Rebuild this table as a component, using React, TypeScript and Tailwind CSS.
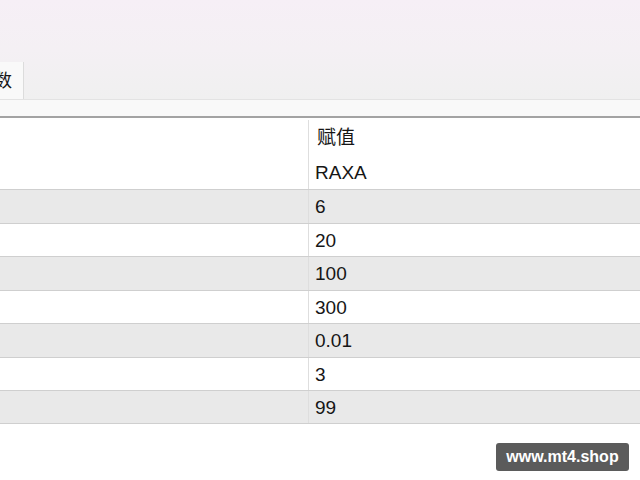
import React from "react";

const rows: { v: string; h: string; gray: boolean }[] = [
  { v: "6", h: "h-[34px]", gray: true },
  { v: "20", h: "h-[33px]", gray: false },
  { v: "100", h: "h-[34px]", gray: true },
  { v: "300", h: "h-[33px]", gray: false },
  { v: "0.01", h: "h-[34px]", gray: true },
  { v: "3", h: "h-[33px]", gray: false },
  { v: "99", h: "h-[33px]", gray: true },
];

const font = { fontFamily: '"Liberation Sans", "Noto Sans CJK SC", sans-serif' };

export default function App() {
  return (
    <div className="relative w-[640px] h-[480px] overflow-hidden bg-white text-[#161616]" style={font}>
      {/* window top + tab strip */}
      <div className="h-[100px] bg-gradient-to-b from-[#f6eff6] via-[#f4f0f4] to-[#f0f0f0] flex items-end border-b border-[#e3e3e3]">
        <div className="w-[24px] h-[37px] bg-[#f9f9f9] border-r border-[#dcdcdc] overflow-hidden flex items-center">
          <span className="text-[18px] -ml-[24px] leading-none whitespace-nowrap">参数</span>
        </div>
      </div>
      <div className="h-[18px] bg-[#f9f9f9] border-b-2 border-[#a3a3a3]" />

      {/* table */}
      <div className="flex flex-col">
        <div className="flex h-[38px]">
          <div className="w-[309px] border-r border-[#dedede] mt-[2px]" />
          <div className="flex-1 pl-[8px] flex items-center text-[19px] pt-[2px]">赋值</div>
        </div>
        <div className="flex h-[34px] border-b border-[#cfcfcf]">
          <div className="w-[309px] border-r border-[#dedede]" />
          <div className="flex-1 pl-[6px] flex items-center text-[19px] pt-[2px]">RAXA</div>
        </div>
        {rows.map((r, i) => (
          <div
            key={i}
            className={`flex ${r.h} border-b border-[#cfcfcf] ${r.gray ? "bg-[#e9e9e9]" : "bg-white"}`}
          >
            <div className="w-[309px] border-r border-[#dedede]" />
            <div className="flex-1 pl-[6px] flex items-center text-[19px] pt-[2px]">{r.v}</div>
          </div>
        ))}
      </div>

      {/* watermark */}
      <div
        className="absolute left-[496px] top-[443px] w-[133px] h-[28px] rounded-[3px] bg-[#5b5b5b] text-white flex items-center justify-center text-[16px] font-bold"
        style={{ fontFamily: '"Liberation Sans", Arial, sans-serif' }}
      >
        www.mt4.shop
      </div>
    </div>
  );
}
